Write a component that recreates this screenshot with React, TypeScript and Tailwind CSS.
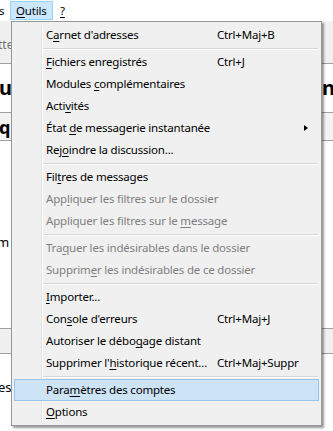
import type { ReactNode } from "react";

type Entry =
  | "sep"
  | {
      label: string;
      shortcut?: string;
      disabled?: boolean;
      submenu?: boolean;
      active?: boolean;
    };

const entries: Entry[] = [
  { label: "C&arnet d'adresses", shortcut: "Ctrl+Maj+B" },
  "sep",
  { label: "&Fichiers enregistrés", shortcut: "Ctrl+J" },
  { label: "Modules &complémentaires" },
  { label: "Acti&vités" },
  { label: "État &de messagerie instantanée", submenu: true },
  { label: "Rej&oindre la discussion..." },
  "sep",
  { label: "Fil&tres de messages" },
  { label: "App&liquer les filtres sur le dossier", disabled: true },
  { label: "Appliquer les filtres sur le &message", disabled: true },
  "sep",
  { label: "Tra&quer les indésirables dans le dossier", disabled: true },
  { label: "Supprim&er les indésirables de ce dossier", disabled: true },
  "sep",
  { label: "&Importer..." },
  { label: "Con&sole d'erreurs", shortcut: "Ctrl+Maj+J" },
  { label: "Autoriser le débo&gage distant" },
  { label: "Supprimer l'&historique récent...", shortcut: "Ctrl+Maj+Suppr" },
  "sep",
  { label: "Para&mètres des comptes", active: true },
  { label: "&Options" },
];

// "&" marks the access key, drawn underlined
function AccessLabel({ text }: { text: string }): ReactNode {
  const i = text.indexOf("&");
  if (i < 0) return text;
  return (
    <>
      {text.slice(0, i)}
      <span className="underline underline-offset-[2px]">{text[i + 1]}</span>
      {text.slice(i + 2)}
    </>
  );
}

function ToolsMenu() {
  return (
    <div className="absolute left-[11px] top-[21px] w-[311px] border border-[#979797] bg-[#f0f0f0] py-[2px] text-[11.5px] tracking-[-0.2px] shadow-[2px_2px_2px_rgba(0,0,0,0.4)]">
      <div className="absolute bottom-[2px] left-[29px] top-[2px] w-[2px] border-l border-[#e2e3e3] bg-white" />
      {entries.map((entry, index) =>
        entry === "sep" ? (
          <div key={index} className="relative ml-[31px] mr-[3px] h-[5px] pt-[2px]">
            <div className="h-px bg-[#d7d7d7]" />
            <div className="h-px bg-white" />
          </div>
        ) : (
          <div
            key={index}
            className={`relative mx-[2px] flex h-[22px] items-center border pl-[31px] ${
              entry.active ? "border-[#99c4ec] bg-[#cde3f6]" : "border-transparent"
            } ${entry.disabled ? "text-[#7f7f7f]" : "text-black"}`}
          >
            <span className="w-[171px] shrink-0 whitespace-nowrap">
              <AccessLabel text={entry.label} />
            </span>
            {entry.shortcut ? <span className="whitespace-nowrap">{entry.shortcut}</span> : null}
            {entry.submenu ? (
              <span className="absolute right-[10px] top-[7px] h-0 w-0 border-y-[3.5px] border-l-[4px] border-y-transparent border-l-black" />
            ) : null}
          </div>
        )
      )}
    </div>
  );
}

export default function App() {
  return (
    <div
      className="relative h-[431px] w-[333px] overflow-hidden bg-white text-[12px] leading-none text-black"
      style={{ fontFamily: "'Noto Sans', 'Open Sans', sans-serif" }}
    >
      <div className="flex h-[21px] items-center bg-white text-[11.5px] tracking-[-0.2px]">
        <span className="-ml-[1px] w-[11px]">s</span>
        <span className="flex h-[19px] w-[43px] items-center border border-[#99d1ff] bg-[#cce8ff] pl-[5px]">
          <AccessLabel text="&Outils" />
        </span>
        <span className="ml-[7px]">
          <AccessLabel text="&?" />
        </span>
      </div>

      <div className="flex h-[43px] items-center border-b border-[#a0a0a0] bg-[#f0f0f0] pt-[6px] text-[#707070]">
        <span className="-ml-[2px]">tte</span>
      </div>

      <div className="flex h-[49px] items-center justify-between border-b border-[#a0a0a0] text-[20px] font-bold">
        <span className="-ml-[1px]">u</span>
        <span className="-mr-[2px]">in</span>
      </div>

      <div className="flex h-[28px] items-center border-b border-[#a0a0a0] bg-[#f3f3f3] text-[18px] font-bold">
        <span className="-ml-[1px]">q</span>
      </div>

      <div className="h-[187px] pt-[95px] text-[13px]">
        <span className="-ml-[3px]">m</span>
      </div>

      <div className="h-[26px] border-y border-[#a0a0a0] bg-[#f0f0f0]" />

      <div className="pt-[27px] text-[13px]">
        <span className="-ml-[2px]">es</span>
      </div>
      <div className="pl-[39px] pt-[42px] text-[13px]">l</div>

      <ToolsMenu />
    </div>
  );
}
